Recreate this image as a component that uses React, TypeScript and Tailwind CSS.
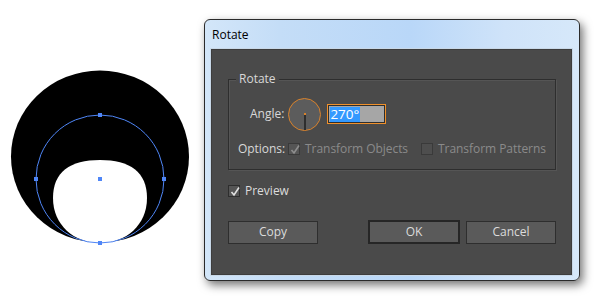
import React from "react";

const font = { fontFamily: '"Open Sans", "Noto Sans", "Liberation Sans", sans-serif' };

function Check({ color }: { color: string }) {
  return (
    <svg width="12" height="12" viewBox="0 0 12 12" className="absolute left-0 top-0">
      <path d="M2.5 6 L5 9 L10 1.5" fill="none" stroke={color} strokeWidth="1.6" />
    </svg>
  );
}

export default function App() {
  return (
    <div className="w-[598px] h-[305px] bg-white flex overflow-hidden" style={font}>
      <svg width="204" height="305" viewBox="0 0 204 305" className="shrink-0">
        <ellipse cx="100" cy="156.5" rx="89" ry="86" fill="#000" />
        <path d="M53 198 C53 172 70 160 100 160 C130 160 147 172 147 198 C147 225 126 243 100 243 C74 243 53 225 53 198 Z" fill="#fff" />
        <circle cx="100" cy="179" r="64" fill="none" stroke="#4f86f7" strokeWidth="1" />
        <rect x="98" y="113" width="4" height="4" fill="#4f86f7" />
        <rect x="34" y="177" width="4" height="4" fill="#4f86f7" />
        <rect x="162" y="177" width="4" height="4" fill="#4f86f7" />
        <rect x="98" y="241" width="4" height="4" fill="#4f86f7" />
        <rect x="98" y="177" width="4" height="4" fill="#4f86f7" />
      </svg>
      <div className="mt-[19px] w-[376px] h-[262px] rounded-[6px] border border-[#2b2b2b] shadow-[3px_4px_10px_rgba(0,0,0,0.55)] bg-[linear-gradient(90deg,#d3e6f9_0%,#c4ddf7_20%,#b9d7f8_55%,#cfe3f9_80%,#d6e8fa_100%)] flex flex-col pl-[5px] pr-[6px] pb-[4px]">
        <div className="h-[28px] flex items-center text-[12px] text-black pl-[2px] pt-[2px]">Rotate</div>
        <div className="flex-1 border border-[#c8d8e8] bg-[#4a4a4a] flex flex-col">
          <div className="border border-[#3d3d3d] flex-1 flex flex-col pl-[16px]">
            <div className="relative mt-[29px] w-[328px] h-[91px] border border-[#2e2e2e] shadow-[inset_1px_1px_0_#555,1px_1px_0_#555]">
              <div className="absolute left-[7px] top-[-9px] bg-[#4a4a4a] px-[3px] text-[12px] leading-[16px] text-[#d8d8d8]">Rotate</div>
              <div className="flex items-center mt-[17px] ml-[21px] h-[34px]">
                <span className="text-[12px] text-[#d8d8d8]">Angle:</span>
                <div className="relative ml-[4px] w-[33px] h-[33px] rounded-full border border-[#d9822b] bg-[#5c5c5c]">
                  <div className="absolute left-[15px] top-[15px] w-[2px] h-[16px] bg-[#2e2e2e]" />
                  <div className="absolute left-[15px] top-[14px] w-[2px] h-[2px] bg-[#d9822b]" />
                </div>
                <div className="ml-[6px] w-[59px] h-[20px] border border-[#f0902a] p-[1px] bg-[#2e2e2e]">
                  <div className="w-full h-full bg-[#a6a6a6] flex items-center pl-[1px]">
                    <span className="bg-[#3399ff] text-white text-[13.5px] leading-[15px] pr-[1px]">270°</span>
                  </div>
                </div>
              </div>
              <div className="flex items-center mt-[9px] ml-[9px] text-[12px] tracking-[-0.05px]">
                <span className="text-[#d8d8d8]">Options:</span>
                <div className="relative ml-[3px] w-[12px] h-[12px] border border-[#3a3a3a] bg-[#555]">
                  <Check color="#8e8e8e" />
                </div>
                <span className="ml-[5px] text-[#8a8a8a]">Transform Objects</span>
                <div className="ml-[13px] w-[12px] h-[12px] border border-[#3a3a3a] bg-[#4e4e4e]" />
                <span className="ml-[5px] text-[#8a8a8a]">Transform Patterns</span>
              </div>
            </div>
            <div className="flex items-center mt-[12px] text-[12px]">
              <div className="relative w-[12px] h-[12px] border border-[#2e2e2e] bg-[#555]">
                <Check color="#e0e0e0" />
              </div>
              <span className="ml-[5px] text-[#dcdcdc]">Preview</span>
            </div>
            <div className="flex items-center mt-[20px] text-[12px] text-[#dcdcdc]">
              <div className="w-[90px] h-[23px] border border-[#2e2e2e] bg-[#5a5a5a] flex items-center justify-center">Copy</div>
              <div className="ml-[50px] w-[92px] h-[24px] border-2 border-[#262626] bg-[#5a5a5a] flex items-center justify-center">OK</div>
              <div className="ml-[6px] w-[90px] h-[23px] border border-[#2e2e2e] bg-[#5a5a5a] flex items-center justify-center">Cancel</div>
            </div>
          </div>
        </div>
      </div>
    </div>
  );
}
